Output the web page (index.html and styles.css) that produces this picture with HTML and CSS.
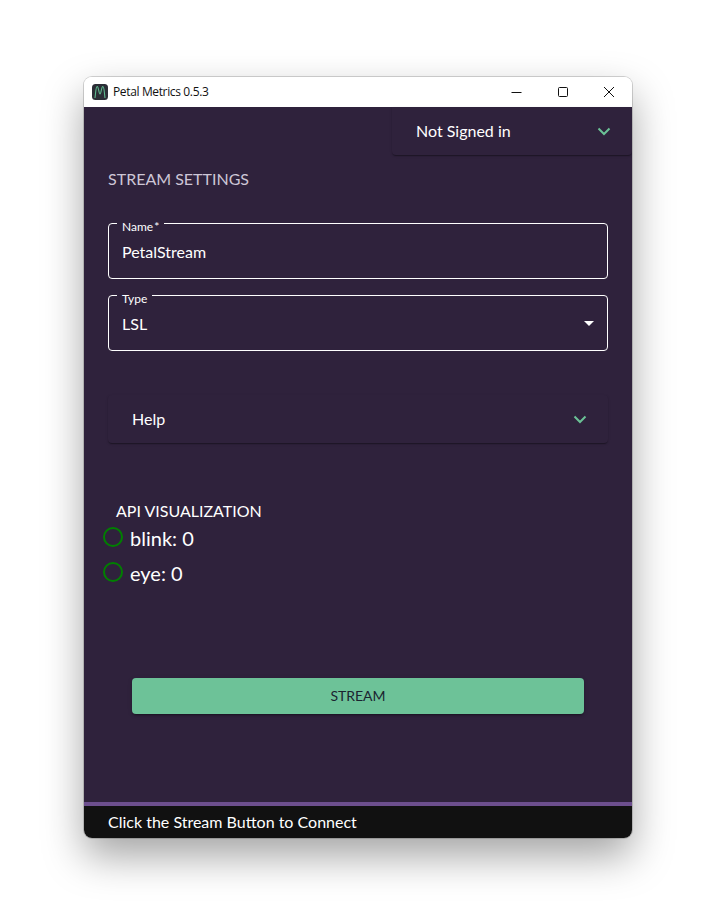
FILE: index.html
```html
<!DOCTYPE html>
<html lang="en">
<head>
<meta charset="utf-8">
<title>Petal Metrics 0.5.3</title>
<link rel="stylesheet" href="styles.css">
</head>
<body>
<div class="window">
  <header class="titlebar">
    <svg class="app-icon" width="16" height="16" viewBox="0 0 16 16"><rect width="16" height="16" rx="3.500" fill="#2b2d36"/><path d="M3 14C3.800 8 3.800 2.500 5.200 2.500S6.800 10 8 10 9.400 2.500 10.800 2.500 12.200 8 13 14" fill="none" stroke="#5fb98e" stroke-width="1.100"/></svg>
    <span class="app-title">Petal Metrics 0.5.3</span>
    <div class="win-controls">
      <span class="win-btn"><svg width="12" height="12" viewBox="0 0 12 12"><path d="M0.500 6.500H10.500" stroke="#111" stroke-width="1"/></svg></span>
      <span class="win-btn"><svg width="12" height="12" viewBox="0 0 12 12"><rect x="1.500" y="1.500" width="9" height="9" rx="1" fill="none" stroke="#111" stroke-width="1"/></svg></span>
      <span class="win-btn"><svg width="12" height="12" viewBox="0 0 12 12"><path d="M1 1L11 11M11 1L1 11" stroke="#111" stroke-width="1"/></svg></span>
    </div>
  </header>
  <main class="content">
    <div class="account-row">
      <div class="accordion account">
        <span class="acc-label">Not Signed in</span>
        <svg class="chev" width="14" height="9" viewBox="0 0 14 9"><path d="M1.500 1.500L7 7L12.500 1.500" fill="none" stroke="#6bc196" stroke-width="2"/></svg>
      </div>
    </div>
    <section class="settings">
      <h2 class="section-title">STREAM SETTINGS</h2>
      <div class="field first">
        <span class="legend">Name<span class="req">*</span></span>
        <span class="value">PetalStream</span>
      </div>
      <div class="field">
        <span class="legend">Type</span>
        <span class="value">LSL</span>
        <svg class="caret" width="10" height="5" viewBox="0 0 10 5"><path d="M0 0H10L5 5Z" fill="#fff"/></svg>
      </div>
      <div class="accordion help">
        <span class="acc-label">Help</span>
        <svg class="chev" width="14" height="9" viewBox="0 0 14 9"><path d="M1.500 1.500L7 7L12.500 1.500" fill="none" stroke="#6bc196" stroke-width="2"/></svg>
      </div>
    </section>
    <section class="api">
      <h2 class="api-title">API VISUALIZATION</h2>
      <div class="metric"><span class="dot"></span><span class="metric-text">blink: 0</span></div>
      <div class="metric"><span class="dot"></span><span class="metric-text">eye: 0</span></div>
    </section>
    <div class="action">
      <button class="stream-btn">STREAM</button>
    </div>
  </main>
  <footer class="status">Click the Stream Button to Connect</footer>
</div>
</body>
</html>
```

FILE: styles.css
```css
* { box-sizing: border-box; }
html, body { margin: 0; height: 100%; background: #fff; overflow: hidden; }
body { padding: 77px 0 0 84px; font-family: Lato, "Open Sans", sans-serif; color: #fff; }
.window {
  width: 548px;
  height: 761px;
  display: flex;
  flex-direction: column;
  border-radius: 8px;
  overflow: hidden;
  box-shadow: 0 18px 40px rgba(0,0,0,.36), 0 0 0 1px rgba(0,0,0,.16);
}
.titlebar {
  height: 30px;
  flex: none;
  display: flex;
  align-items: center;
  background: #fff;
  color: #111;
  padding-left: 8px;
}
.app-icon { flex: none; }
.app-title { margin-left: 5px; font: 12px "Open Sans", sans-serif; letter-spacing: -.36px; position: relative; top: -1px; }
.win-controls { margin-left: auto; display: flex; }
.win-btn { width: 46px; height: 30px; display: flex; align-items: center; justify-content: center; }
.content { flex: 1; background: #2f223c; display: flex; flex-direction: column; min-height: 0; }
.account-row { display: flex; justify-content: flex-end; }
.accordion {
  height: 48px;
  display: flex;
  align-items: center;
  justify-content: space-between;
  background: #2f223c;
  border-radius: 0 0 4px 4px;
  box-shadow: 0 2px 1px -1px rgba(0,0,0,.2), 0 1px 1px 0 rgba(0,0,0,.14), 0 1px 3px 0 rgba(0,0,0,.12);
  font-size: 16px;
  padding: 0 21px 0 24px;
}
.acc-label { position: relative; top: -1px; }
.account { width: 240px; }
.settings { padding: 0 24px; }
.section-title {
  margin: 15px 0 0;
  font-size: 16px;
  line-height: 18px;
  font-weight: 400;
  color: #cdc6d6;
}
.field {
  position: relative;
  height: 56px;
  margin-top: 16px;
  border: 1px solid #fff;
  border-radius: 4px;
  padding: 0 13px;
  display: flex;
  align-items: center;
  font-size: 16px;
}
.field.first { margin-top: 35px; }
.legend {
  position: absolute;
  left: 8px;
  top: -5px;
  height: 12px;
  padding: 0 5px;
  background: #2f223c;
  font-size: 12px;
  line-height: 15px;
}
.req { margin-left: 1px; }
.value { position: relative; }
.caret { position: absolute; right: 13px; top: 25px; }
.help { margin-top: 44px; height: 48px; border-radius: 4px; }
.api { padding: 0 0 0 19px; margin-top: 59px; }
.api-title { margin: 0 0 0 13px; font-size: 16px; line-height: 18px; font-weight: 400; }
.metric { display: flex; align-items: center; gap: 7px; height: 35px; font-size: 20px; }
.metric:first-of-type { margin-top: 2px; }
.metric-text { position: relative; top: -2px; }
.dot { width: 20px; height: 20px; margin-top: -5px; border: 2px solid #008000; border-radius: 50%; }
.action { padding: 0 48px; margin-top: 86px; }
.stream-btn {
  width: 100%;
  height: 36px;
  border: 0;
  border-radius: 4px;
  background: #6dc298;
  color: #1b2430;
  font: 14px/36px Lato, sans-serif;
  padding: 0;
  box-shadow: 0 3px 1px -2px rgba(0,0,0,.2), 0 2px 2px 0 rgba(0,0,0,.14), 0 1px 5px 0 rgba(0,0,0,.12);
}
.status {
  height: 36px;
  flex: none;
  background: #111;
  border-top: 4px solid #6d4f8e;
  padding-left: 24px;
  font-size: 16px;
  line-height: 31px;
}
```
